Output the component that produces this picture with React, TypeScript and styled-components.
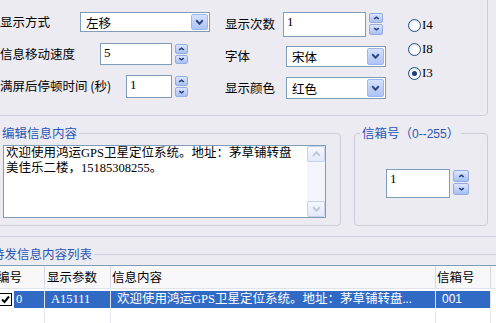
import React from 'react'
import styled, { createGlobalStyle } from 'styled-components'

const BG = '#ecebf1'
const LINE = '#cdcedb'
const FIELD = '#7f9db9'
const TITLE = '#2a57b6'
const SERIF = `"Liberation Serif", "Noto Sans CJK SC", serif`
const SANS = `"Noto Sans CJK SC", sans-serif`

const GlobalStyle = createGlobalStyle`
  html, body {
    margin: 0;
    padding: 0;
    background: ${BG};
  }
  body {
    font-family: ${SANS};
    font-size: 12.5px;
    color: #000;
  }
`

const Screen = styled.div`
  width: 496px;
  height: 323px;
  overflow: hidden;
  background: ${BG};
`

const SettingsFrame = styled.div`
  padding-bottom: 10px;
  border-bottom: 1px solid ${LINE};
`

const Group = styled.fieldset<{ $w: number; $h: number; $pad?: number }>`
  box-sizing: border-box;
  flex: none;
  width: ${p => p.$w}px;
  height: ${p => p.$h}px;
  min-width: 0;
  margin: 0;
  padding: 0 ${p => p.$pad ?? 5}px;
  border: 1px solid ${LINE};
  border-radius: 4px;
`

const Legend = styled.legend`
  padding: 0 2px;
  color: ${TITLE};
  font-size: 12.5px;
  line-height: 16px;
  white-space: nowrap;
`

const RangeText = styled.span`
  font-family: "Liberation Sans", ${SANS};
  font-size: 12px;
`

const ParamGroup = styled(Group)`
  margin: -14px 0 0 -6px;
`

const EditRow = styled.div`
  display: flex;
  margin-top: 9px;
`

const EditGroup = styled(Group)`
  margin-left: -6px;
`

const BoxGroup = styled(Group)`
  margin-left: 13px;
`

const ListGroup = styled(Group)`
  margin: 9px 0 0 -17px;
`

const ParamBody = styled.div`
  display: flex;
`

const Column = styled.div<{ $w?: number; $top: number; $ml?: number }>`
  display: flex;
  flex-direction: column;
  flex: none;
  width: ${p => (p.$w ? `${p.$w}px` : 'auto')};
  padding-top: ${p => p.$top}px;
  margin-left: ${p => p.$ml ?? 0}px;
`

const Row = styled.div<{ $h: number }>`
  display: flex;
  align-items: center;
  height: ${p => p.$h}px;
`

const Label = styled.span<{ $w: number }>`
  flex: none;
  width: ${p => p.$w}px;
  white-space: nowrap;
  line-height: 16px;
`

const TextBox = styled.div<{ $w: number; $h: number }>`
  box-sizing: border-box;
  flex: none;
  width: ${p => p.$w}px;
  height: ${p => p.$h}px;
  padding: 1px 3px;
  border: 1px solid ${FIELD};
  background: #fff;
  font-family: ${SERIF};
  font-size: 13px;
  line-height: 16px;
`

const Spin = styled.div`
  display: flex;
  align-items: flex-start;
  gap: 3px;
`

const SpinButtons = styled.div<{ $w: number; $h: number }>`
  display: flex;
  flex: none;
  flex-direction: column;
  gap: 1px;
  width: ${p => p.$w}px;
  height: ${p => p.$h}px;
  margin-top: 1px;
`

const SpinButton = styled.span`
  flex: 1;
  display: flex;
  align-items: center;
  justify-content: center;
  border: 1px solid #94ace4;
  border-radius: 2px;
  background: linear-gradient(#dbe5fd, #a8bff2);
`

const Combo = styled.div<{ $w: number; $h: number }>`
  box-sizing: border-box;
  display: flex;
  align-items: stretch;
  width: ${p => p.$w}px;
  height: ${p => p.$h}px;
  padding: 1px;
  border: 1px solid ${FIELD};
  background: #fff;
`

const ComboText = styled.span`
  flex: 1;
  display: flex;
  align-items: center;
  padding-left: 4px;
`

const DropButton = styled.span`
  box-sizing: border-box;
  width: 17px;
  display: flex;
  align-items: center;
  justify-content: center;
  border: 1px solid #9fb6ec;
  border-radius: 2px;
  background: linear-gradient(#d6e2fe, #adc3f4);
`

const RadioRow = styled.label`
  display: flex;
  align-items: center;
  height: 24px;
  gap: 1px;
  font-family: ${SERIF};
  font-size: 13px;
`

const RadioDot = styled.span<{ $on?: boolean }>`
  box-sizing: border-box;
  width: 13px;
  height: 13px;
  display: flex;
  align-items: center;
  justify-content: center;
  border: 1px solid #1c5180;
  border-radius: 50%;
  background: radial-gradient(circle at 60% 60%, #fff 30%, #dcdce6);
  &::after {
    content: '';
    display: ${p => (p.$on ? 'block' : 'none')};
    width: 5px;
    height: 5px;
    border-radius: 50%;
    background: #1f3c78;
  }
`

const TextArea = styled.div`
  box-sizing: border-box;
  display: flex;
  width: 323px;
  height: 73px;
  margin: 4px 0 0 3px;
  border: 1px solid ${FIELD};
  background: #fff;
`

const TextContent = styled.div`
  flex: 1;
  padding: 0 2px;
  font-family: ${SERIF};
  font-size: 12.5px;
  line-height: 15px;
  white-space: pre;
`

const ScrollBar = styled.div`
  display: flex;
  flex-direction: column;
  justify-content: space-between;
  width: 18px;
  background: #f4f5fb;
`

const ScrollButton = styled.span`
  box-sizing: border-box;
  height: 16px;
  display: flex;
  align-items: center;
  justify-content: center;
  border: 1px solid #c8d1ea;
  border-radius: 2px;
  background: linear-gradient(#f5f7fe, #e4e9f8);
`

const BoxBody = styled.div`
  display: flex;
  justify-content: flex-end;
  padding: 27px 13px 0 0;
`

const ListView = styled.div`
  margin: 3px 0 0 4px;
  background: #fff;
  border-top: 1px solid ${FIELD};
`

const COLS = '51px 66px 325px 55px 1fr'

const HeaderRow = styled.div`
  display: grid;
  grid-template-columns: ${COLS};
  height: 22px;
  background: #f8f8fa;
  border-bottom: 1px solid #e2e2ea;
`

const HeaderCell = styled.div<{ $pad?: number }>`
  padding-left: ${p => p.$pad ?? 2}px;
  line-height: 22px;
  border-right: 1px solid #d8d8e2;
  white-space: nowrap;
`

const DataRow = styled.div<{ $h: number }>`
  display: grid;
  grid-template-columns: ${COLS};
  height: ${p => p.$h}px;
  margin-top: 2px;
`

const Cell = styled.div<{ $sel?: boolean; $sans?: boolean; $pad?: number }>`
  padding-left: ${p => p.$pad ?? 6}px;
  border-right: 1px solid #e4e4ec;
  background: ${p => (p.$sel ? '#316ac5' : '#fff')};
  color: ${p => (p.$sel ? '#fff' : '#000')};
  font-family: ${p => (p.$sans ? `"Liberation Sans", ${SANS}` : SERIF)};
  font-size: ${p => (p.$sans ? 12 : 12.5)}px;
  line-height: 17px;
  white-space: nowrap;
  overflow: hidden;
`

const FirstCell = styled.div`
  display: flex;
  align-items: center;
  padding-left: 5px;
  border-right: 1px solid #e4e4ec;
`

const CheckBox = styled.span`
  box-sizing: border-box;
  flex: none;
  width: 13px;
  height: 13px;
  display: flex;
  align-items: center;
  justify-content: center;
  border: 1px solid #000;
  background: #fff;
`

const SelText = styled.span`
  flex: 1;
  align-self: stretch;
  margin-left: 2px;
  padding-left: 2px;
  background: #316ac5;
  color: #fff;
  font-family: ${SERIF};
  line-height: 17px;
`

const Chevron = ({ dir, color, w = 9, h = 6, sw = 1.8 }: { dir: 'up' | 'down'; color: string; w?: number; h?: number; sw?: number }) => (
  <svg width={w} height={h} viewBox={`0 0 ${w} ${h}`}>
    <path
      d={dir === 'down' ? `M1.2 1.2 L${w / 2} ${h - 1.2} L${w - 1.2} 1.2` : `M1.2 ${h - 1.2} L${w / 2} 1.2 L${w - 1.2} ${h - 1.2}`}
      stroke={color}
      strokeWidth={sw}
      fill="none"
    />
  </svg>
)

const SpinBox = ({ w, h, bw, bh, value }: { w: number; h: number; bw: number; bh: number; value: string }) => (
  <Spin>
    <TextBox $w={w} $h={h}>{value}</TextBox>
    <SpinButtons $w={bw} $h={bh}>
      <SpinButton>
        <Chevron dir="up" color="#243f7c" w={7} h={4} sw={1.6} />
      </SpinButton>
      <SpinButton>
        <Chevron dir="down" color="#243f7c" w={7} h={4} sw={1.6} />
      </SpinButton>
    </SpinButtons>
  </Spin>
)

const ComboBox = ({ w, h, value }: { w: number; h: number; value: string }) => (
  <Combo $w={w} $h={h}>
    <ComboText>{value}</ComboText>
    <DropButton>
      <Chevron dir="down" color="#2e4a86" sw={2} />
    </DropButton>
  </Combo>
)

const Radio = ({ label, on }: { label: string; on?: boolean }) => (
  <RadioRow>
    <RadioDot $on={on} />
    {label}
  </RadioRow>
)

const App = () => (
  <Screen>
    <GlobalStyle />
    <SettingsFrame>
      <ParamGroup $w={494} $h={130}>
        <Legend>显示参数</Legend>
        <ParamBody>
          <Column $w={225} $top={4}>
            <Row $h={32}>
              <Label $w={80}>显示方式</Label>
              <ComboBox w={130} h={20} value="左移" />
            </Row>
            <Row $h={32}>
              <Label $w={100}>信息移动速度</Label>
              <SpinBox w={72} h={22} bw={13} bh={20} value="5" />
            </Row>
            <Row $h={32}>
              <Label $w={126}>满屏后停顿时间 (秒)</Label>
              <SpinBox w={46} h={23} bw={13} bh={21} value="1" />
            </Row>
          </Column>
          <Column $w={175} $top={6}>
            <Row $h={32}>
              <Label $w={58}>显示次数</Label>
              <SpinBox w={83} h={25} bw={14} bh={22} value="1" />
            </Row>
            <Row $h={32}>
              <Label $w={61}>字体</Label>
              <ComboBox w={100} h={21} value="宋体" />
            </Row>
            <Row $h={32}>
              <Label $w={61}>显示颜色</Label>
              <ComboBox w={100} h={22} value="红色" />
            </Row>
          </Column>
          <Column $top={11} $ml={8}>
            <Radio label="I4" />
            <Radio label="I8" />
            <Radio label="I3" on />
          </Column>
        </ParamBody>
      </ParamGroup>
      <EditRow>
        <EditGroup $w={347} $h={101}>
          <Legend>编辑信息内容</Legend>
          <TextArea>
            <TextContent>{'欢迎使用鸿运GPS卫星定位系统。地址：茅草铺转盘\n美佳乐二楼，15185308255。'}</TextContent>
            <ScrollBar>
              <ScrollButton>
                <Chevron dir="up" color="#b9c3dc" />
              </ScrollButton>
              <ScrollButton>
                <Chevron dir="down" color="#b9c3dc" />
              </ScrollButton>
            </ScrollBar>
          </TextArea>
        </EditGroup>
        <BoxGroup $w={134} $h={101}>
          <Legend>
            信箱号（<RangeText>0--255</RangeText>）
          </Legend>
          <BoxBody>
            <SpinBox w={64} h={29} bw={16} bh={25} value="1" />
          </BoxBody>
        </BoxGroup>
      </EditRow>
    </SettingsFrame>
    <ListGroup $w={540} $h={100} $pad={6}>
      <Legend>待发信息内容列表</Legend>
      <ListView>
        <HeaderRow>
          <HeaderCell $pad={3}>编号</HeaderCell>
          <HeaderCell>显示参数</HeaderCell>
          <HeaderCell $pad={1}>信息内容</HeaderCell>
          <HeaderCell $pad={1}>信箱号</HeaderCell>
          <HeaderCell />
        </HeaderRow>
        <DataRow $h={17}>
          <FirstCell>
            <CheckBox>
              <svg width="9" height="9" viewBox="0 0 9 9">
                <path d="M1 4.5 L3.5 7 L8 1.5" stroke="#000" strokeWidth="2" fill="none" />
              </svg>
            </CheckBox>
            <SelText>0</SelText>
          </FirstCell>
          <Cell $sel>A15111</Cell>
          <Cell $sel>欢迎使用鸿运GPS卫星定位系统。地址：茅草铺转盘...</Cell>
          <Cell $sel $sans>001</Cell>
          <Cell />
        </DataRow>
        <DataRow $h={40}>
          <Cell />
          <Cell />
          <Cell />
          <Cell />
          <Cell />
        </DataRow>
      </ListView>
    </ListGroup>
  </Screen>
)

export default App
